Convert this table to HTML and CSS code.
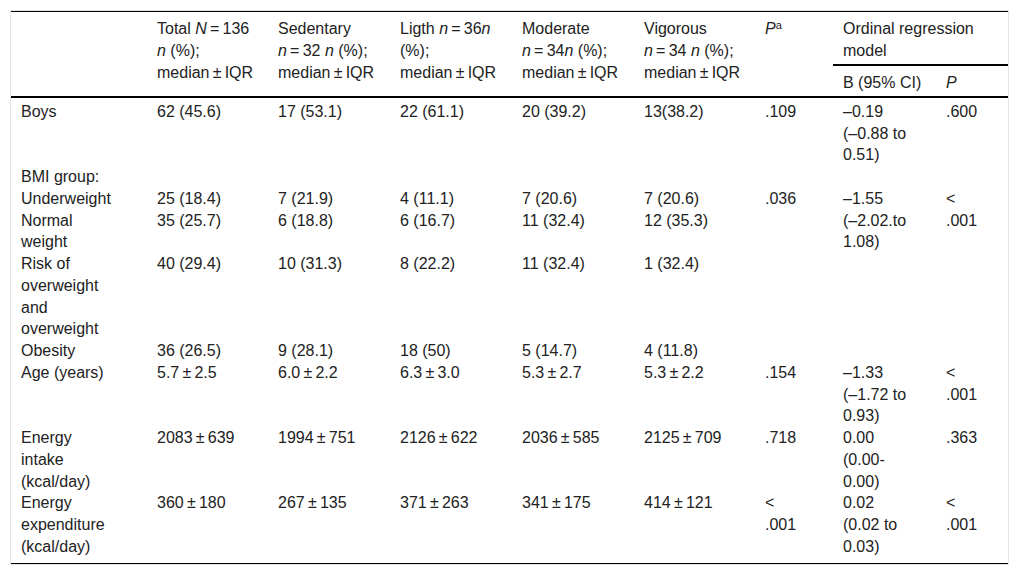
FILE: index.html
```html
<!DOCTYPE html>
<html lang="en">
<head>
<meta charset="utf-8">
<title>Table</title>
<link rel="stylesheet" href="styles.css">
</head>
<body>
<div class="wrap">
<table class="data">
<colgroup>
<col class="c-label"><col class="c-total"><col class="c-grp"><col class="c-grp"><col class="c-grp"><col class="c-grp2"><col class="c-p"><col class="c-b"><col class="c-p2">
</colgroup>
<thead>
<tr>
<th rowspan="2"></th>
<th rowspan="2">Total <i>N</i>&thinsp;=&thinsp;136<br><i>n</i> (%);<br>median&thinsp;±&thinsp;IQR</th>
<th rowspan="2">Sedentary<br><i>n</i>&thinsp;=&thinsp;32 <i>n</i> (%);<br>median&thinsp;±&thinsp;IQR</th>
<th rowspan="2">Ligth <i>n</i>&thinsp;=&thinsp;36<i>n</i><br>(%);<br>median&thinsp;±&thinsp;IQR</th>
<th rowspan="2">Moderate<br><i>n</i>&thinsp;=&thinsp;34<i>n</i> (%);<br>median&thinsp;±&thinsp;IQR</th>
<th rowspan="2">Vigorous<br><i>n</i>&thinsp;=&thinsp;34 <i>n</i> (%);<br>median&thinsp;±&thinsp;IQR</th>
<th rowspan="2"><i>P</i><sup>a</sup></th>
<th colspan="2" class="grp">Ordinal regression<br>model</th>
</tr>
<tr>
<th class="sub">B (95% CI)</th>
<th class="sub"><i>P</i></th>
</tr>
</thead>
<tbody>
<tr>
<td>Boys</td><td>62 (45.6)</td><td>17 (53.1)</td><td>22 (61.1)</td><td>20 (39.2)</td><td>13(38.2)</td><td>.109</td><td>–0.19<br>(–0.88 to<br>0.51)</td><td>.600</td>
</tr>
<tr>
<td>BMI group:</td><td></td><td></td><td></td><td></td><td></td><td></td><td></td><td></td>
</tr>
<tr>
<td>Underweight</td><td>25 (18.4)</td><td>7 (21.9)</td><td>4 (11.1)</td><td>7 (20.6)</td><td>7 (20.6)</td><td rowspan="4">.036</td><td rowspan="4">–1.55<br>(–2.02.to<br>1.08)</td><td rowspan="4">&lt;<br>.001</td>
</tr>
<tr>
<td>Normal<br>weight</td><td>35 (25.7)</td><td>6 (18.8)</td><td>6 (16.7)</td><td>11 (32.4)</td><td>12 (35.3)</td>
</tr>
<tr>
<td>Risk of<br>overweight<br>and<br>overweight</td><td>40 (29.4)</td><td>10 (31.3)</td><td>8 (22.2)</td><td>11 (32.4)</td><td>1 (32.4)</td>
</tr>
<tr>
<td>Obesity</td><td>36 (26.5)</td><td>9 (28.1)</td><td>18 (50)</td><td>5 (14.7)</td><td>4 (11.8)</td>
</tr>
<tr>
<td>Age (years)</td><td>5.7&thinsp;±&thinsp;2.5</td><td>6.0&thinsp;±&thinsp;2.2</td><td>6.3&thinsp;±&thinsp;3.0</td><td>5.3&thinsp;±&thinsp;2.7</td><td>5.3&thinsp;±&thinsp;2.2</td><td>.154</td><td>–1.33<br>(–1.72 to<br>0.93)</td><td>&lt;<br>.001</td>
</tr>
<tr>
<td>Energy<br>intake<br>(kcal/day)</td><td>2083&thinsp;±&thinsp;639</td><td>1994&thinsp;±&thinsp;751</td><td>2126&thinsp;±&thinsp;622</td><td>2036&thinsp;±&thinsp;585</td><td>2125&thinsp;±&thinsp;709</td><td>.718</td><td>0.00<br>(0.00-<br>0.00)</td><td>.363</td>
</tr>
<tr>
<td>Energy<br>expenditure<br>(kcal/day)</td><td>360&thinsp;±&thinsp;180</td><td>267&thinsp;±&thinsp;135</td><td>371&thinsp;±&thinsp;263</td><td>341&thinsp;±&thinsp;175</td><td>414&thinsp;±&thinsp;121</td><td>&lt;<br>.001</td><td>0.02<br>(0.02 to<br>0.03)</td><td>&lt;<br>.001</td>
</tr>
</tbody>
</table>
</div>
</body>
</html>
```
FILE: styles.css
```css
html, body {
  margin: 0;
  padding: 0;
  background: #ffffff;
}

body {
  font-family: "Liberation Sans", Arial, Helvetica, sans-serif;
  color: #222222;
}

.wrap {
  margin: 10px;
  border: 1px solid #e4e4e4;
}

.data {
  width: 100%;
  border-collapse: collapse;
  table-layout: fixed;
  font-size: 16px;
  line-height: 21.75px;
  border-top: 1px solid #000;
  border-bottom: 1px solid #000;
}

.c-label { width: 136px; }
.c-total { width: 121px; }
.c-grp { width: 122px; }
.c-grp2 { width: 121px; }
.c-p { width: 78px; }
.c-b { width: 103px; }
.c-p2 { width: 72px; }

.data th,
.data td {
  text-align: left;
  vertical-align: top;
  font-weight: normal;
  padding: 0 8px 0 10px;
}

.data thead th {
  padding: 6px 8px 2px 10px;
}

.data thead {
  border-bottom: 2px solid #000;
}

.data th.grp {
  border-bottom: 2px solid #000;
}

.data th.sub {
  padding-top: 6px;
  padding-bottom: 3px;
}

.data tbody tr:first-child td {
  padding-top: 2.5px;
}

.data tbody tr:last-child td {
  padding-bottom: 5px;
}

.data sup {
  font-size: 11px;
  line-height: 0;
  vertical-align: 5px;
}
```
